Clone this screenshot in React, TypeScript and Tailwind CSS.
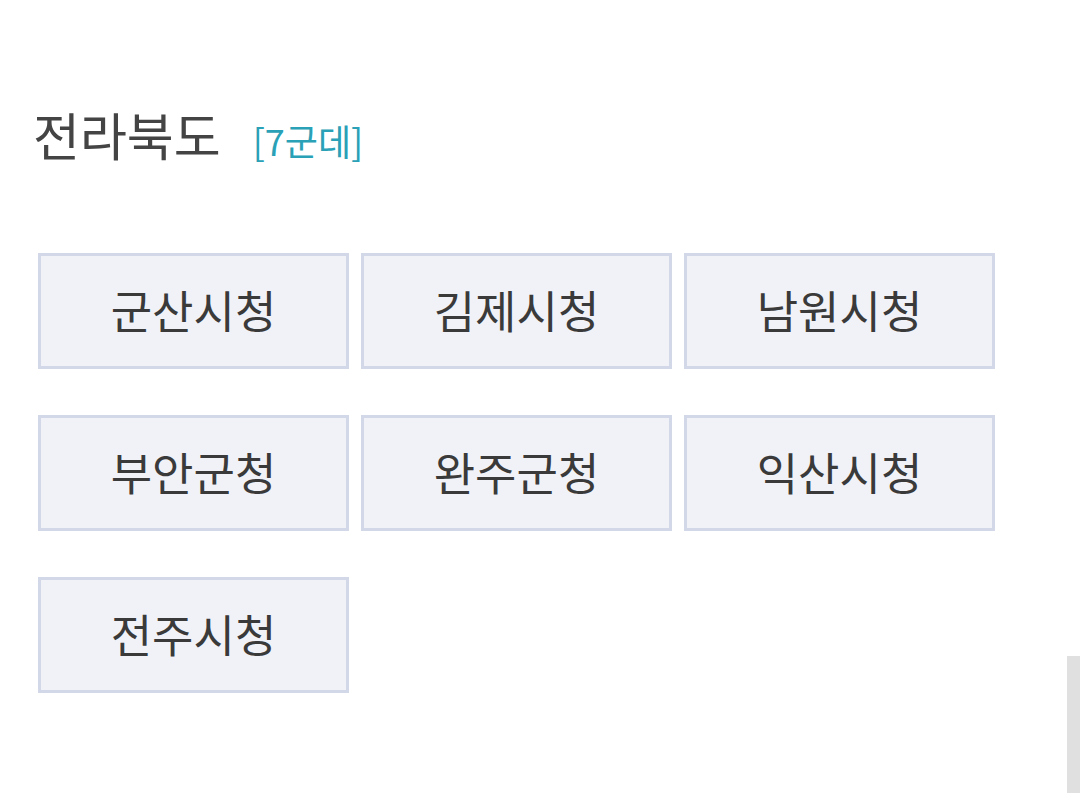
import React from 'react';

const OFFICES = ['군산시청', '김제시청', '남원시청', '부안군청', '완주군청', '익산시청', '전주시청'];

export default function App() {
  return (
    <div
      className="relative w-[1080px] h-[793px] overflow-hidden bg-white"
      style={{ fontFamily: '"Noto Sans CJK KR", "Noto Sans", sans-serif' }}
    >
      <div className="pl-[38px] pt-[101px]">
        <div className="flex items-baseline gap-[32px] -ml-[5px]">
          <h2 className="text-[51px] leading-[66px] font-normal text-[#444444]">전라북도</h2>
          <span className="text-[36px] leading-[48px] text-[#2aa1b6]">[7군데]</span>
        </div>
        <div className="mt-[86px] grid grid-cols-[311px_311px_311px] gap-x-[12px] gap-y-[46px]">
          {OFFICES.map((name) => (
            <div
              key={name}
              className="h-[116px] flex items-center justify-center pb-[3px] border-[3px] border-[#d3d8e8] bg-[#f1f2f8] text-[45px] text-[#3a3a3a]"
            >
              {name}
            </div>
          ))}
        </div>
      </div>
      {/* scrollbar thumb */}
      <div className="absolute right-0 top-[656px] w-[13px] h-[137px] bg-[#e0e0e0]" />
    </div>
  );
}
